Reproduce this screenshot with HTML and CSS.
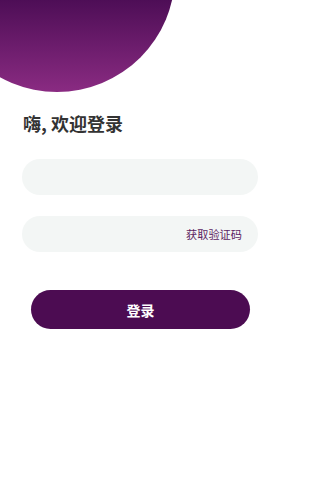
FILE: index.html
```html
<!DOCTYPE html>
<html lang="zh">
<head>
<meta charset="utf-8">
<link rel="stylesheet" href="styles.css">
</head>
<body>
<div class="page">
  <div class="hero"><div class="blob"></div></div>
  <h1 class="title">嗨, 欢迎登录</h1>
  <div class="form">
    <div class="field"><input class="input" type="text"></div>
    <div class="field code">
      <input class="input" type="text">
      <span class="get-code">获取验证码</span>
    </div>
  </div>
  <button class="login">登录</button>
</div>
</body>
</html>
```
FILE: styles.css
```css
* { box-sizing: border-box; }
html, body { margin: 0; padding: 0; background: #fff; }
body {
  font-family: "Noto Sans CJK SC", "Noto Sans", sans-serif;
  width: 281px;
  height: 500px;
  overflow: hidden;
}
.page { display: flex; flex-direction: column; }
.hero { height: 92px; overflow: hidden; }
.blob {
  width: 236px;
  height: 236px;
  margin-top: -144px;
  margin-left: -61px;
  border-radius: 50%;
  background: linear-gradient(to bottom, #3f0a48 0%, #4c0d55 60%, #8a2b82 100%);
}
.title {
  margin: 20px 0 0 23px;
  font-size: 18px;
  line-height: 22px;
  font-weight: 700;
  color: #333;
}
.form {
  margin: 25px 23px 0 22px;
  display: flex;
  flex-direction: column;
  gap: 21px;
}
.field {
  height: 36px;
  border-radius: 18px;
  background: #f3f6f5;
  display: flex;
  align-items: center;
  padding: 0 16px 0 18px;
}
.input {
  flex: 1;
  min-width: 0;
  border: 0;
  background: transparent;
  outline: none;
  font: inherit;
  font-size: 13px;
}
.get-code {
  font-size: 11.2px;
  color: #5c1d62;
  white-space: nowrap;
}
.login {
  margin: 38px 31px 0 31px;
  height: 39px;
  border: 0;
  border-radius: 20px;
  background: #4c0c52;
  color: #fff;
  font-family: inherit;
  font-size: 14px;
  font-weight: 700;
}
```
